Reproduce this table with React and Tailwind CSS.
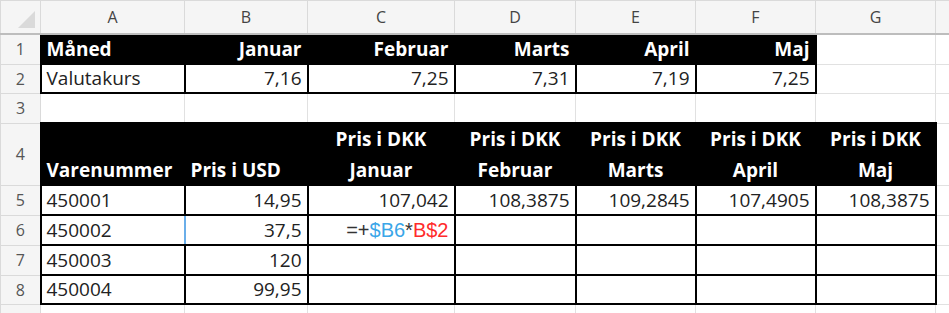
import React from 'react';

const widths = [40, 144, 123, 147, 121, 120, 120, 120, 120];
const letters = ['A', 'B', 'C', 'D', 'E', 'F', 'G', ''];

const grid = 'border border-[#e1e1e1]';
const boxed = 'border-2 border-black';
const pad = 'px-[5px] align-bottom leading-[27px] whitespace-nowrap overflow-hidden';

function RowNum({ n }) {
    return (
        <td className="bg-[#f5f5f5] border border-[#dadada] text-center align-middle text-[16px] text-[#555]">
            {n}
        </td>
    );
}

export default function App() {
    return (
        <div className="w-[949px] h-[313px] overflow-hidden bg-white font-['Open_Sans',sans-serif] text-[19px] text-[#222]">
            <table className="table-fixed border-collapse w-[1055px]">
                <colgroup>
                    {widths.map((w, i) => (
                        <col key={i} style={{ width: w }} />
                    ))}
                </colgroup>
                <tbody>
                    {/* column letters */}
                    <tr className="h-[33px]">
                        <td className="bg-[#f5f5f5] border border-[#dadada] border-b-2 border-b-[#bdbdbd] p-0 align-middle">
                            <svg width="40" height="32" viewBox="0 0 40 32" className="block">
                                <polygon points="34,10 34,27 17,27" fill="#dadada" />
                            </svg>
                        </td>
                        {letters.map((l, i) => (
                            <td
                                key={i}
                                className="bg-[#f5f5f5] border border-[#dadada] border-b-2 border-b-[#bdbdbd] text-center align-middle text-[16px] text-[#444]"
                            >
                                {l}
                            </td>
                        ))}
                    </tr>

                    {/* row 1 */}
                    <tr className="h-[30px]">
                        <RowNum n={1} />
                        <td className={`${pad} bg-black ${boxed} text-white font-bold`}>Måned</td>
                        {['Januar', 'Februar', 'Marts', 'April', 'Maj'].map((m) => (
                            <td key={m} className={`${pad} bg-black ${boxed} text-white font-bold text-right`}>
                                {m}
                            </td>
                        ))}
                        <td className={grid}></td>
                        <td className={grid}></td>
                    </tr>

                    {/* row 2 */}
                    <tr className="h-[29px]">
                        <RowNum n={2} />
                        <td className={`${pad} ${boxed}`}>Valutakurs</td>
                        {['7,16', '7,25', '7,31', '7,19', '7,25'].map((v, i) => (
                            <td key={i} className={`${pad} ${boxed} text-right`}>
                                {v}
                            </td>
                        ))}
                        <td className={grid}></td>
                        <td className={grid}></td>
                    </tr>

                    {/* row 3 */}
                    <tr className="h-[30px]">
                        <RowNum n={3} />
                        {letters.map((l, i) => (
                            <td key={i} className={grid}></td>
                        ))}
                    </tr>

                    {/* row 4 */}
                    <tr className="h-[61px]">
                        <RowNum n={4} />
                        <td className={`${pad} bg-black border-2 border-black border-r border-r-[#9a9a9a] text-white font-bold`}>
                            Varenummer
                        </td>
                        <td className={`${pad} bg-black border-2 border-black border-r border-r-[#9a9a9a] text-white font-bold`}>
                            Pris i USD
                        </td>
                        {['Januar', 'Februar', 'Marts', 'April', 'Maj'].map((m) => (
                            <td key={m} className={`px-[5px] align-bottom bg-black ${boxed} text-white font-bold text-center`}>
                                <div className="leading-[31px] -mb-[2px]">
                                    Pris i DKK
                                    <br />
                                    {m}
                                </div>
                            </td>
                        ))}
                        <td className={grid}></td>
                    </tr>

                    {/* row 5 */}
                    <tr className="h-[30px]">
                        <RowNum n={5} />
                        <td className={`${pad} ${boxed}`}>450001</td>
                        {['14,95', '107,042', '108,3875', '109,2845', '107,4905', '108,3875'].map((v, i) => (
                            <td key={i} className={`${pad} ${boxed} text-right`}>
                                {v}
                            </td>
                        ))}
                        <td className={grid}></td>
                    </tr>

                    {/* row 6 */}
                    <tr className="h-[30px]">
                        <RowNum n={6} />
                        <td className={`${pad} ${boxed} border-r-[#6aaee9]`}>450002</td>
                        <td className={`${pad} ${boxed} text-right`}>37,5</td>
                        <td className={`${pad} ${boxed} text-right text-[20px] font-['Liberation_Sans',sans-serif]`}>
                            <span className="text-[#333]">=+</span>
                            <span className="text-[#3aa6e8]">$B6</span>
                            <span className="text-[#333]">*</span>
                            <span className="text-[#ff2b2b]">B$2</span>
                        </td>
                        <td className={boxed}></td>
                        <td className={boxed}></td>
                        <td className={boxed}></td>
                        <td className={boxed}></td>
                        <td className={grid}></td>
                    </tr>

                    {/* rows 7-8 */}
                    {[
                        [7, '450003', '120'],
                        [8, '450004', '99,95'],
                    ].map(([n, id, usd]) => (
                        <tr key={n} className={n === 7 ? 'h-[30px]' : 'h-[29px]'}>
                            <RowNum n={n} />
                            <td className={`${pad} ${boxed}`}>{id}</td>
                            <td className={`${pad} ${boxed} text-right`}>{usd}</td>
                            <td className={boxed}></td>
                            <td className={boxed}></td>
                            <td className={boxed}></td>
                            <td className={boxed}></td>
                            <td className={boxed}></td>
                            <td className={grid}></td>
                        </tr>
                    ))}

                    {/* row 9, mostly below the edge */}
                    <tr className="h-[30px]">
                        <RowNum n={9} />
                        {letters.map((l, i) => (
                            <td key={i} className={grid}></td>
                        ))}
                    </tr>
                </tbody>
            </table>
        </div>
    );
}
